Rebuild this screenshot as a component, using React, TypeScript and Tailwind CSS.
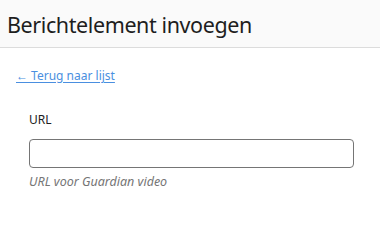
export default function App() {
  return (
    <div className="w-[380px] h-[222px] bg-white font-['Noto_Sans',sans-serif] text-[#1e1e1e]">
      <div className="h-[48px] bg-[#fafafa] border-b border-[#dcdcdc] flex items-center px-[7px]">
        <h1 className="text-[21.5px] leading-none tracking-[-0.4px] font-normal text-[#1e1e1e] pt-[2px]">Berichtelement invoegen</h1>
      </div>
      <div className="px-4 pt-[18px]">
        <div className="text-[12px] leading-[20px]">
          <a href="#" className="text-[#4a8fe0] underline underline-offset-2">
            ← Terug naar lijst
          </a>
        </div>
        <div className="pl-[13px] pr-[10px] pt-[26px]">
          <label className="block text-[12px] leading-[16px] text-[#1e1e1e]">URL</label>
          <input
            type="text"
            className="mt-[11px] block w-[325px] h-[29px] rounded-[4px] border border-[#757575] bg-white"
          />
          <p className="mt-[6px] text-[12.5px] leading-[16px] italic text-[#757575]">URL voor Guardian video</p>
        </div>
      </div>
    </div>
  );
}
